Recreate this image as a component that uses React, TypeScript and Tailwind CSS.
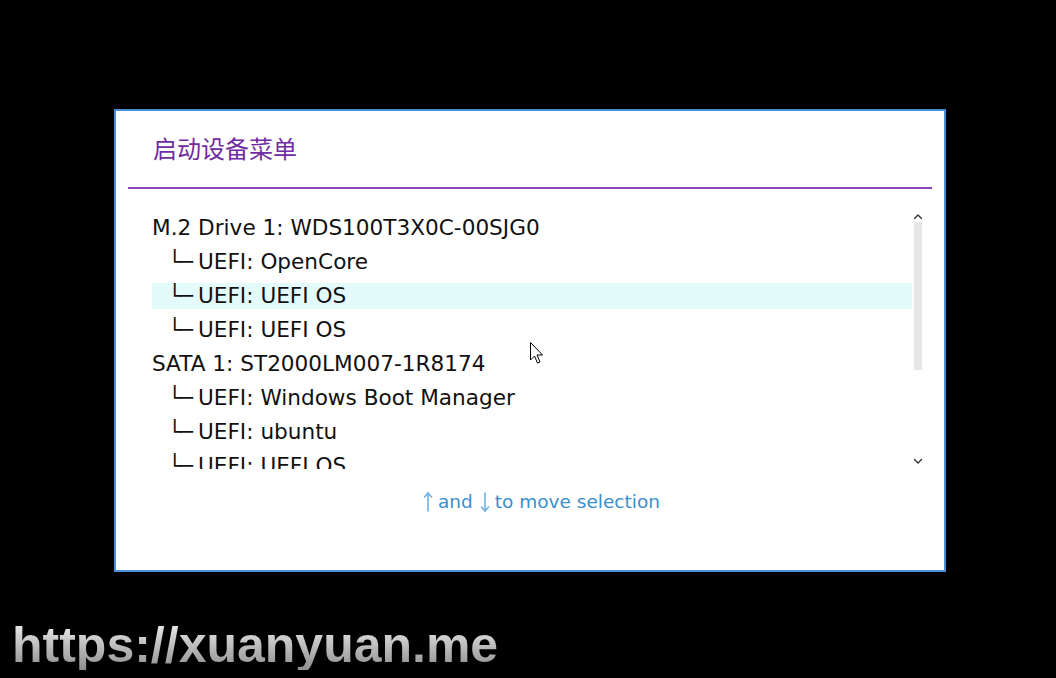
import React from 'react';

type Entry = { label: string; child?: boolean; selected?: boolean };

const entries: Entry[] = [
  { label: 'M.2 Drive 1: WDS100T3X0C-00SJG0' },
  { label: 'UEFI: OpenCore', child: true },
  { label: 'UEFI: UEFI OS', child: true, selected: true },
  { label: 'UEFI: UEFI OS', child: true },
  { label: 'SATA 1: ST2000LM007-1R8174' },
  { label: 'UEFI: Windows Boot Manager', child: true },
  { label: 'UEFI: ubuntu', child: true },
  { label: 'UEFI: UEFI OS', child: true },
];

const Chevron = ({ down }: { down?: boolean }) => (
  <svg width="10" height="7" viewBox="0 0 10 7" fill="none" stroke="#333" strokeWidth="1.4" strokeLinecap="round" strokeLinejoin="round">
    {down ? <polyline points="1.5 1.5 5 5 8.5 1.5" /> : <polyline points="1.5 5.5 5 2 8.5 5.5" />}
  </svg>
);

const Arrow = ({ down }: { down?: boolean }) => (
  <svg width="10" height="22" viewBox="0 0 10 22" fill="none" stroke="#6fb0e0" strokeWidth="1.6" strokeLinecap="round" strokeLinejoin="round">
    <line x1="5" y1="2" x2="5" y2="20" />
    {down ? <polyline points="1.5 16 5 20 8.5 16" /> : <polyline points="1.5 6 5 2 8.5 6" />}
  </svg>
);

export default function App() {
  return (
    <div className="relative w-[1056px] h-[678px] bg-black overflow-hidden flex flex-col">
      <div className="ml-[114px] mt-[109px] w-[832px] h-[463px] border-2 border-[#4a8fd8] bg-white flex flex-col">
        <div className="pl-[37px] pt-[21px] h-[54px] leading-[32px] text-[24px] text-[#6f2da0] font-['Noto_Sans_CJK_SC',sans-serif]">
          启动设备菜单
        </div>
        <div className="mt-[22px] mx-[12px] h-[2px] bg-[#8b45b8]" />

        <div className="mt-[21px] h-[259px] flex pl-[36px] font-['DejaVu_Sans',sans-serif] text-[21.6px] text-[#111]">
          <div className="w-[760px] overflow-hidden pt-[1px]">
            {entries.map((e, i) => (
              <div key={i} className="h-[34px] py-[4px]">
                <div className={`h-full flex items-center whitespace-nowrap ${e.selected ? 'bg-[#e4fbfb]' : ''} ${e.child ? 'pl-[16px]' : ''}`}>
                  {e.child && <span className="w-[30px] shrink-0 tracking-[-1px]">└─</span>}
                  <span>{e.label}</span>
                </div>
              </div>
            ))}
          </div>
          <div className="ml-[2px] w-[8px] flex flex-col items-center">
            <div className="pt-[3px]">
              <Chevron />
            </div>
            <div className="mt-[2px] h-[148px] w-[8px] bg-[#e6e6e6]" />
            <div className="flex-1" />
            <div className="mb-[4px]">
              <Chevron down />
            </div>
          </div>
        </div>

        <div className="mt-[21px] h-[24px] flex items-center pl-[307px] font-['DejaVu_Sans',sans-serif] text-[18.5px] text-[#3a8fcc] whitespace-nowrap">
          <Arrow />
          <span className="ml-[5px]">and</span>
          <span className="ml-[7px]">
            <Arrow down />
          </span>
          <span className="ml-[5px]">to move selection</span>
        </div>
      </div>

      <div className="ml-[12px] mt-[48px] leading-none text-[50px] font-bold font-['Liberation_Sans',Arial,sans-serif] bg-linear-to-b from-[#f2f2f2] to-[#8e8e8e] bg-clip-text text-transparent">
        https://xuanyuan.me
      </div>

      <svg className="absolute left-[530px] top-[342px]" width="16" height="24" viewBox="0 0 16 24">
        <path d="M0.5 0.5 L0.5 18 L4.5 14 L7.5 21 L10 20 L7 13 L12.5 13 Z" fill="#fff" stroke="#000" strokeWidth="1" strokeLinejoin="round" />
      </svg>
    </div>
  );
}
